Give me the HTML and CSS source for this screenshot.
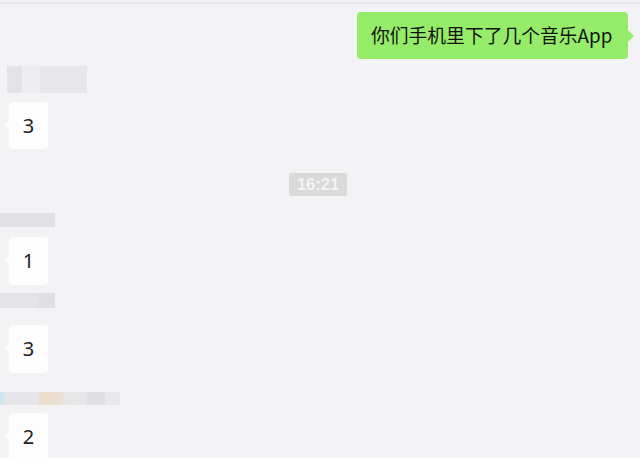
FILE: index.html
```html
<html>
<head>
    <title>Chat</title>
    <link rel="stylesheet" href="styles.css">
</head>
<body>
    <div class="topline"></div>
    <div class="chat">
        <div class="row-right">
            <div class="bubble mine">你们手机里下了几个音乐App</div>
        </div>

        <div class="name n1"><span class="av"></span><span class="nm"></span></div>
        <div class="bubble other b1">3</div>

        <div class="time-row"><span class="time">16:21</span></div>

        <div class="name n2"></div>
        <div class="bubble other b2">1</div>

        <div class="name n3"></div>
        <div class="bubble other b3">3</div>

        <div class="name n4"></div>
        <div class="bubble other b4">2</div>
    </div>
</body>
</html>
```

FILE: styles.css
```css
body {
    margin: 0;
    background: #f3f3f5;
    font-family: "Noto Sans", "Noto Sans CJK SC", sans-serif;
    overflow: hidden;
    height: 458px;
}

.topline {
    margin-top: 2px;
    height: 2px;
    background: #e8e8ea;
}

.chat {
    display: flex;
    flex-direction: column;
    align-items: flex-start;
}

.row-right {
    align-self: stretch;
    display: flex;
    justify-content: flex-end;
    margin-top: 8px;
    padding-right: 12px;
}

.bubble {
    position: relative;
    border-radius: 4px;
    box-sizing: border-box;
}

.mine {
    background: #95ec69;
    color: #121212;
    height: 47px;
    width: 271px;
    padding-left: 14px;
    font-size: 18.8px;
    line-height: 46px;
    font-family: "Noto Sans CJK SC", sans-serif;
    white-space: nowrap;
}

.mine::after {
    content: "";
    position: absolute;
    right: -6px;
    top: 18px;
    border-top: 6px solid transparent;
    border-bottom: 6px solid transparent;
    border-left: 6px solid #95ec69;
}

.other {
    background: #fdfdfe;
    color: #222;
    width: 39px;
    height: 48px;
    margin-left: 9px;
    font-size: 20px;
    line-height: 47px;
    text-align: center;
}

.other::before {
    content: "";
    position: absolute;
    left: -5px;
    top: 18px;
    border-top: 5px solid transparent;
    border-bottom: 5px solid transparent;
    border-right: 5px solid #fbfbfc;
}

.b1 { margin-top: 9px; height: 47px; }
.b2 { margin-top: 10px; }
.b3 { margin-top: 17px; }
.b4 { margin-top: 8px; }

.time-row {
    align-self: stretch;
    display: flex;
    justify-content: center;
    margin-top: 24px;
    padding-right: 4px;
}

.time {
    background: #dadada;
    color: #f4f4f4;
    font-family: "Liberation Sans", sans-serif;
    font-weight: bold;
    font-size: 16.5px;
    width: 58px;
    height: 23px;
    line-height: 23px;
    text-align: center;
    border-radius: 2px;
}

.name {
    display: flex;
}

.n1 {
    margin-top: 7px;
    margin-left: 7px;
    height: 27px;
}

.n1 .av {
    width: 15px;
    background: #e3e3e5;
}

.n1 .nm {
    width: 65px;
    background: linear-gradient(90deg, #ededef 0, #ededef 18px, #e7e7e9 18px, #e7e7e9 100%);
}

.n2 {
    margin-top: 17px;
    width: 55px;
    height: 14px;
    background: #e2e2e4;
}

.n3 {
    margin-top: 8px;
    width: 55px;
    height: 15px;
    background: linear-gradient(90deg, #e4e4e6 0, #e4e4e6 38px, #e0e0e2 38px);
}

.n4 {
    margin-top: 19px;
    width: 120px;
    height: 13px;
    background: linear-gradient(90deg, #c9e6f2 0, #e6e6e8 6px, #e6e6e8 38px, #eddcc9 40px, #eadfd3 60px, #e7e7e9 66px, #e7e7e9 86px, #dfdfe1 88px, #dfdfe1 104px, #e9e9eb 106px);
}
```
